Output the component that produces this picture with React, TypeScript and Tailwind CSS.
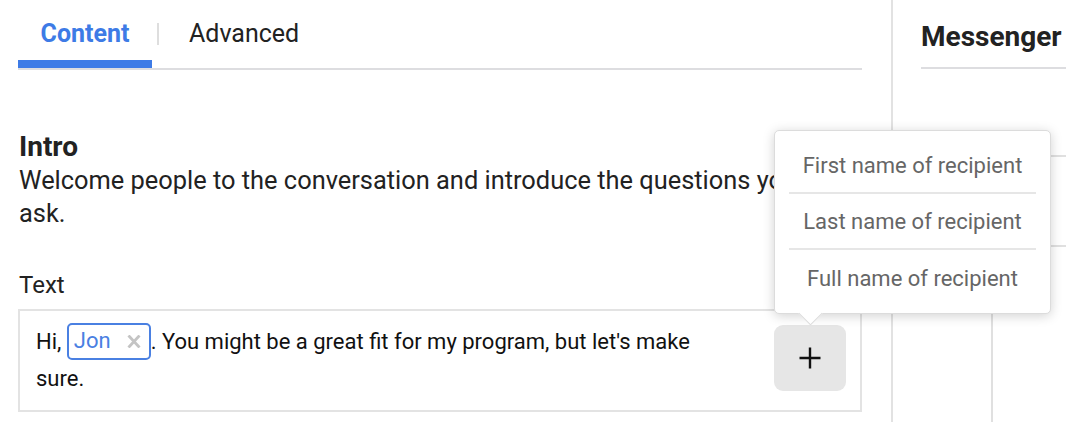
import React from "react";

export default function App() {
  return (
    <div
      className="relative flex h-[422px] w-[1066px] overflow-hidden bg-white text-[#222]"
      style={{ fontFamily: "Roboto, 'Liberation Sans', sans-serif" }}
    >
      {/* Left panel */}
      <div className="flex w-[893px] shrink-0 flex-col border-r-2 border-[#e2e2e2] pl-[18px] pr-[29px]">
        {/* Tabs */}
        <div className="flex flex-col">
          <div className="flex h-[60px] items-center pt-[7px]">
            <div className="flex w-[134px] justify-center text-[25px] font-bold text-[#3d7be6]">Content</div>
            <div className="ml-[5px] h-[22px] w-[2px] bg-[#dedede]" />
            <div className="ml-[30px] text-[25px] text-[#222]">Advanced</div>
          </div>
          <div className="h-[8px] w-[134px] bg-[#3d7be6]" />
          <div className="h-[2px] w-full bg-[#dddde0]" />
        </div>

        {/* Intro */}
        <div className="mt-[59px] flex flex-col pl-[1px]">
          <div className="text-[28px] font-bold leading-[35px] text-[#222]">Intro</div>
          <div className="max-w-[830px] text-[25.4px] leading-[33px] text-[#222]">
            Welcome people to the conversation and introduce the questions you'll ask.
          </div>
          <div className="mt-[40px] text-[24px] leading-[30px] text-[#222]">Text</div>
        </div>

        {/* Text box */}
        <div className="mt-[9px] flex h-[103px] border-2 border-[#e3e3e3] pl-[16px] pr-[14px] pt-[14px]">
          <div className="-mt-[2px] w-[686px] text-[22px] leading-[37px] text-[#111]">
            Hi,{" "}
            <span className="-my-[6px] inline-flex h-[37px] -translate-y-[2px] items-center rounded-[5px] border-2 border-[#4a80e2] pl-[5px] pr-[8px] align-middle leading-none">
              <span className="text-[#4a80e2]">Jon</span>
              <svg className="ml-[16px]" width="14" height="13" viewBox="0 0 14 13">
                <path d="M1.5 0.5 L12.5 12.5 M12.5 0.5 L1.5 12.5" stroke="#c4c4c4" strokeWidth="2.8" strokeLinecap="butt" />
              </svg>
            </span>
            . You might be a great fit for my program, but let's make sure.
          </div>
          <div className="relative ml-auto self-start">
            <button className="flex h-[66px] w-[72px] items-center justify-center rounded-[9px] bg-[#e6e6e6]">
              <svg width="24" height="24" viewBox="0 0 24 24">
                <path d="M12 1.5 V22.5 M1.5 12 H22.5" stroke="#111" strokeWidth="2.4" />
              </svg>
            </button>
            {/* Popover */}
            <div className="absolute bottom-[77px] left-0 w-[277px] rounded-[5px] border border-[#dcdcdc] bg-white py-[7px] shadow-[0_2px_12px_rgba(0,0,0,0.18)]">
              <div className="flex flex-col px-[14px]">
                <div className="flex h-[56px] items-center justify-center border-b-2 border-[#e6e6e6] text-[22px] text-[#666]">
                  First name of recipient
                </div>
                <div className="flex h-[56px] items-center justify-center border-b-2 border-[#e6e6e6] text-[22px] text-[#666]">
                  Last name of recipient
                </div>
                <div className="flex h-[56px] items-center justify-center text-[22px] text-[#666]">
                  Full name of recipient
                </div>
              </div>
              <div className="absolute -bottom-[9px] left-[27px] h-[17px] w-[17px] rotate-45 border-b border-r border-[#dcdcdc] bg-white" />
            </div>
          </div>
        </div>
      </div>

      {/* Right panel */}
      <div className="flex flex-1 flex-col pl-[28px]">
        <div className="flex h-[69px] items-center border-b-2 border-[#dddde0] pt-[6px]">
          <div className="whitespace-nowrap text-[28px] font-bold text-[#222]">Messenger</div>
        </div>
        <div className="ml-[70px] mt-[86px] flex flex-1 flex-col border-t-2 border-[#e0e0e0]">
          <div className="mt-[88px] flex-1 border-l-2 border-t-2 border-[#e0e0e0]" />
        </div>
      </div>
    </div>
  );
}
